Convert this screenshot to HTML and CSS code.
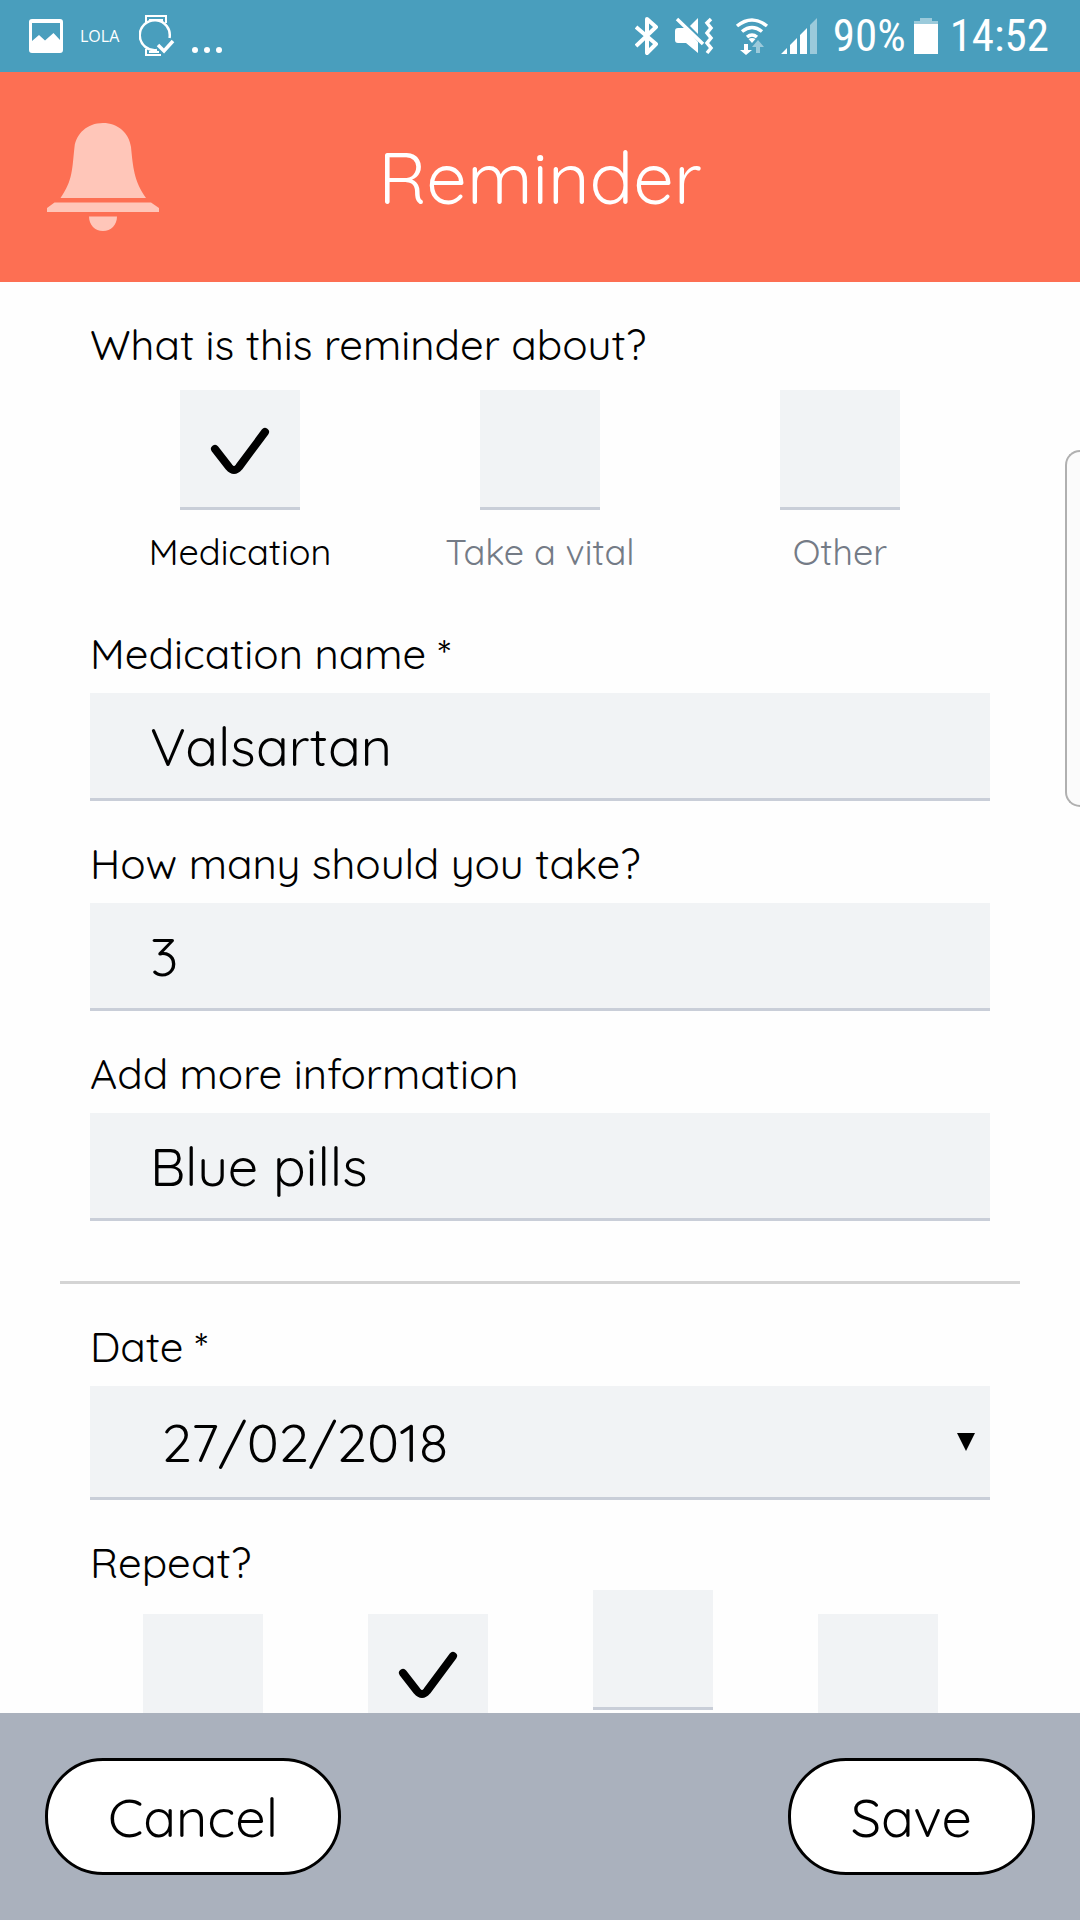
FILE: index.html
```html
<!DOCTYPE html>
<html lang="en">
<head>
<meta charset="utf-8">
<meta name="viewport" content="width=device-width, initial-scale=1">
<title>Reminder</title>
<link rel="stylesheet" href="styles.css">
</head>
<body>
<div class="app">
  <div class="status">
    <div class="status-group status-left">
      <svg width="36" height="36" viewBox="0 0 36 36" aria-hidden="true"><path fill="#fff" fill-rule="evenodd" d="M4 1h28a3 3 0 0 1 3 3v28a3 3 0 0 1-3 3H4a3 3 0 0 1-3-3V4a3 3 0 0 1 3-3zm0 4v18l7-6 6 5.500 8.500-7.500L32 22V5z"/></svg>
      <span class="carrier">LOLA</span>
      <svg class="icon-watch" width="36" height="44" viewBox="0 0 36 44" fill="none" stroke="#fff" aria-hidden="true">
        <path stroke-width="2" d="M7 9V2h20v7M10 6h14M7 35v6h15M10 38h10"/>
        <path stroke-width="2.500" d="M30.500 24A15 15 0 1 0 18 36"/>
        <path stroke-width="3.500" d="M19 31l6 6 9-10"/>
      </svg>
      <svg class="icon-dots" width="32" height="8" viewBox="0 0 32 8" fill="#fff" aria-hidden="true"><circle cx="4" cy="4" r="3"/><circle cx="16" cy="4" r="3"/><circle cx="28" cy="4" r="3"/></svg>
    </div>
    <div class="status-group status-right">
      <svg width="24" height="40" viewBox="0 0 24 40" fill="none" stroke="#fff" stroke-width="4" stroke-linejoin="round" aria-hidden="true"><path d="M1 11l20 17-9 9V3l9 8L1 30"/></svg>
      <svg class="icon-mute" width="40" height="40" viewBox="0 0 40 40" aria-hidden="true"><path fill="#fff" d="M0 15q0-3 3-3h8l12 14v11L11 27H3q-3 0-3-3zM15 10l8-8v16z"/><path fill="none" stroke="#fff" stroke-width="3.500" d="M2 3l26 25M36 3l-4 4 4 5-4 5 4 5-4 5 4 5-4 5"/></svg>
      <svg class="icon-wifi" width="34" height="40" viewBox="0 0 34 40" aria-hidden="true"><g fill="none" stroke="#fff" stroke-width="3.500"><path d="M2 10q15-12 30 0M7 15.500q10-8 20 0M12 21q5-4 10 0"/></g><path fill="#fff" d="M13.500 23q3.500-2 7 0L17 27zM9 28h4v6h4l-6 5-6-5h4z"/><path fill="#fff" opacity=".45" d="M21 37v-6h-4l6-7 6 7h-4v6z"/></svg>
      <svg class="icon-signal" width="36" height="38" viewBox="0 0 36 38" aria-hidden="true"><path fill="#fff" d="M0 37l6-6v6zM9 28l7-7v16H9zM19 18l7-7v26h-7z"/><path fill="#fff" opacity=".45" d="M29 8l7-7v36h-7z"/></svg>
      <span class="battery-text">90%</span>
      <svg width="24" height="38" viewBox="0 0 24 38" aria-hidden="true"><path fill="#fff" opacity=".45" d="M6 1h12v3h6v3H0V4h6z"/><path fill="#fff" d="M0 7h24v30H0z"/></svg>
      <span class="clock">14:52</span>
    </div>
  </div>

  <header class="header">
    <svg class="bell" width="114" height="110" viewBox="0 0 114 110" fill="#ffc6b9" aria-hidden="true"><path d="M57 1C41 1 30 12 28.500 25C26 47 27 58 14.500 76H100C88 59 87 45 85 25C83 11 72 1 57 1zM8.500 80.500H105L113 86v4H1v-4zM43 94.500H71C71 103 65 109 57 109S43 103 43 94.500z"/></svg>
    <h1 class="title">Reminder</h1>
  </header>

  <main class="content">
    <form class="form" id="reminder-form">
      <fieldset class="group">
        <legend class="label">What is this reminder about?</legend>
        <div class="choices choices-about">
          <label class="choice choice-on"><input class="tick" type="checkbox" checked><span>Medication</span></label>
          <label class="choice"><input class="tick" type="checkbox"><span>Take a vital</span></label>
          <label class="choice"><input class="tick" type="checkbox"><span>Other</span></label>
        </div>
      </fieldset>

      <div class="field">
        <label class="label" for="name">Medication name *</label>
        <input class="control" id="name" type="text" value="Valsartan">
      </div>
      <div class="field">
        <label class="label" for="amount">How many should you take?</label>
        <input class="control" id="amount" type="text" inputmode="numeric" value="3">
      </div>
      <div class="field">
        <label class="label" for="info">Add more information</label>
        <input class="control" id="info" type="text" value="Blue pills">
      </div>

      <hr class="divider">

      <div class="field">
        <label class="label" for="date">Date *</label>
        <select class="control control-select" id="date"><option>27/02/2018</option></select>
      </div>

      <fieldset class="group">
        <legend class="label">Repeat?</legend>
        <div class="choices choices-repeat">
          <input class="tick" type="checkbox" aria-label="Never">
          <input class="tick" type="checkbox" aria-label="Daily" checked>
          <input class="tick tick-raised" type="checkbox" aria-label="Weekly">
          <input class="tick" type="checkbox" aria-label="Monthly">
        </div>
      </fieldset>
    </form>
    <div class="edge-handle"></div>
  </main>

  <footer class="footer">
    <button class="button" type="button">Cancel</button>
    <button class="button" type="submit" form="reminder-form">Save</button>
  </footer>
</div>
</body>
</html>
```

FILE: styles.css
```css
* {
  box-sizing: border-box;
}

body {
  margin: 0;
  background: #fefefe;
  color: #000;
  font-family: Quicksand, Lato, sans-serif;
  font-weight: 400;
}

.app {
  display: flex;
  flex-direction: column;
  height: 100vh;
}

/* Status bar */
.status {
  display: flex;
  flex: none;
  align-items: center;
  justify-content: space-between;
  height: 72px;
  padding: 0 31px 0 28px;
  background: #499ebd;
  color: #fff;
  font-family: "Roboto Condensed", "Liberation Sans Narrow", Roboto, sans-serif;
  font-weight: 400;
}

.status-group {
  display: flex;
  align-items: center;
}

.carrier {
  margin: 0 20px 0 16px;
  font-family: "Open Sans", sans-serif;
  font-size: 16px;
}

.icon-dots {
  margin: 28px 0 0 16px;
}

.icon-mute {
  margin-left: 16px;
}

.icon-wifi {
  margin-left: 20px;
}

.icon-signal {
  margin-left: 12px;
}

.battery-text,
.clock {
  font-size: 45px;
  line-height: 72px;
}

.battery-text {
  margin: 0 8px 0 16px;
}

.clock {
  margin-left: 12px;
}

/* Title bar */
.header {
  position: relative;
  display: flex;
  flex: none;
  align-items: center;
  justify-content: center;
  height: 210px;
  background: #fd6f53;
  color: #fff;
}

.bell {
  position: absolute;
  top: 50px;
  left: 46px;
}

.title {
  margin: 0;
  font-size: 72px;
  font-weight: 400;
  line-height: 90px;
}

/* Form */
.content {
  position: relative;
  flex: 1;
  min-height: 0;
  overflow: hidden;
}

.form {
  padding: 36px 90px 0;
}

.group {
  min-width: 0;
  margin: 0;
  padding: 0;
  border: 0;
}

.label {
  display: block;
  padding: 0;
  font-size: 42px;
  line-height: 54px;
}

.choices {
  display: grid;
  justify-items: center;
}

.choices-about {
  grid-template-columns: repeat(3, 1fr);
  margin: 18px 0 51px;
}

.choices-repeat {
  grid-template-columns: repeat(4, 1fr);
  margin-top: 24px;
}

.choice {
  display: flex;
  flex-direction: column;
  align-items: center;
  gap: 18px;
  color: #747b86;
  font-size: 36px;
  line-height: 48px;
}

.choice-on {
  color: #000;
}

.tick {
  width: 120px;
  height: 120px;
  margin: 0;
  appearance: none;
  border: 0;
  border-bottom: 3px solid #c9ced8;
  border-radius: 0;
  background: #f1f3f5;
}

.tick:checked {
  background: #f1f3f5 url("data:image/svg+xml,%3Csvg xmlns='http://www.w3.org/2000/svg' width='120' height='117' fill='none' stroke='%23000' stroke-width='8' stroke-linecap='round' stroke-linejoin='round'%3E%3Cpath d='M35 59L49 77Q54 83 59 77L85 42'/%3E%3C/svg%3E") no-repeat;
}

.tick-raised {
  margin-top: -24px;
}

.field {
  display: flex;
  flex-direction: column;
  gap: 12px;
  margin-bottom: 36px;
}

.control {
  width: 100%;
  height: 108px;
  margin: 0;
  padding: 0 60px;
  appearance: none;
  border: 0;
  border-bottom: 3px solid #c9ced8;
  border-radius: 0;
  background: #f1f3f5;
  color: #000;
  font: inherit;
  font-size: 54px;
}

.control-select {
  height: 114px;
  padding: 0 72px;
  background: #f1f3f5 url("data:image/svg+xml,%3Csvg xmlns='http://www.w3.org/2000/svg' width='18' height='18'%3E%3Cpath d='M0 0H18L9 18z'/%3E%3C/svg%3E") no-repeat right 15px center;
}

.divider {
  height: 3px;
  margin: 60px -30px 36px;
  border: 0;
  background: #d4d4d4;
}

.edge-handle {
  position: absolute;
  top: 168px;
  right: 0;
  width: 15px;
  height: 357px;
  border: 2px solid #b0b0b0;
  border-right: 0;
  border-radius: 20px 0 0 20px;
  background: #fbfbfb;
}

/* Actions */
.footer {
  display: flex;
  flex: none;
  align-items: flex-start;
  justify-content: space-between;
  padding: 45px;
  background: #aab1bd;
}

.button {
  height: 117px;
  padding: 0 60px;
  border: 3px solid #000;
  border-radius: 58px;
  background: #fff;
  color: #000;
  font: inherit;
  font-size: 54px;
}
```
